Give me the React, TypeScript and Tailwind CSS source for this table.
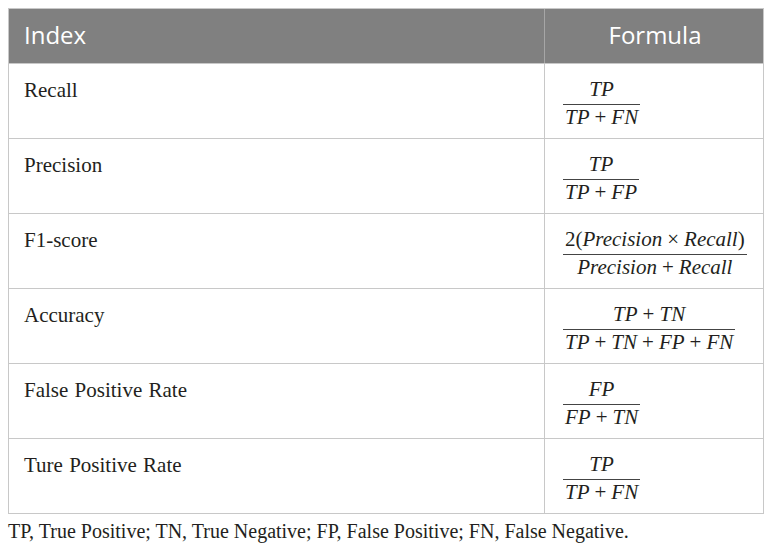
import React from "react";

const serif = { fontFamily: '"Liberation Serif", "Times New Roman", serif' };

function I({ children }: { children: React.ReactNode }) {
  return <span className="italic">{children}</span>;
}

function Op({ children }: { children: React.ReactNode }) {
  return <span className="not-italic px-[5px]">{children}</span>;
}

function Frac({ num, den }: { num: React.ReactNode; den: React.ReactNode }) {
  return (
    <div className="inline-flex flex-col items-stretch text-[21px] leading-[24px] text-[#231f20]">
      <div className="text-center pb-[3px] px-[2px] border-b border-[#444]">{num}</div>
      <div className="text-center px-[2px]">{den}</div>
    </div>
  );
}

const rows: { label: string; formula: React.ReactNode }[] = [
  {
    label: "Recall",
    formula: (
      <Frac
        num={<I>TP</I>}
        den={
          <>
            <I>TP</I>
            <Op>+</Op>
            <I>FN</I>
          </>
        }
      />
    ),
  },
  {
    label: "Precision",
    formula: (
      <Frac
        num={<I>TP</I>}
        den={
          <>
            <I>TP</I>
            <Op>+</Op>
            <I>FP</I>
          </>
        }
      />
    ),
  },
  {
    label: "F1-score",
    formula: (
      <Frac
        num={
          <>
            2(<I>Precision</I>
            <Op>×</Op>
            <I>Recall</I>)
          </>
        }
        den={
          <>
            <I>Precision</I>
            <Op>+</Op>
            <I>Recall</I>
          </>
        }
      />
    ),
  },
  {
    label: "Accuracy",
    formula: (
      <Frac
        num={
          <>
            <I>TP</I>
            <Op>+</Op>
            <I>TN</I>
          </>
        }
        den={
          <>
            <I>TP</I>
            <Op>+</Op>
            <I>TN</I>
            <Op>+</Op>
            <I>FP</I>
            <Op>+</Op>
            <I>FN</I>
          </>
        }
      />
    ),
  },
  {
    label: "False Positive Rate",
    formula: (
      <Frac
        num={<I>FP</I>}
        den={
          <>
            <I>FP</I>
            <Op>+</Op>
            <I>TN</I>
          </>
        }
      />
    ),
  },
  {
    label: "Ture Positive Rate",
    formula: (
      <Frac
        num={<I>TP</I>}
        den={
          <>
            <I>TP</I>
            <Op>+</Op>
            <I>FN</I>
          </>
        }
      />
    ),
  },
];

export default function App() {
  return (
    <div className="w-[772px] h-[552px] bg-white pt-[8px] pl-[8px]" style={serif}>
      <div className="w-[756px] border border-[#c8c8c8]">
        <div
          className="grid grid-cols-[535px_1px_1fr] h-[54px] bg-[#808080] text-white text-[24px]"
          style={{ fontFamily: '"Open Sans", "Noto Sans", sans-serif' }}
        >
          <div className="flex items-center pl-[15px] pb-[2px]">Index</div>
          <div className="bg-[#a6a6a6]" />
          <div className="flex items-center justify-center pb-[2px] pl-[2px]">Formula</div>
        </div>
        {rows.map((r) => (
          <div
            key={r.label}
            className="grid grid-cols-[535px_1px_1fr] h-[75px] border-t border-[#c8c8c8]"
          >
            <div className="pl-[15px] pt-[11px] text-[21px] leading-[30px] text-[#231f20] [word-spacing:1px]">
              {r.label}
            </div>
            <div className="bg-[#c8c8c8]" />
            <div className="pl-[18px] pt-[13px]">{r.formula}</div>
          </div>
        ))}
      </div>
      <div className="mt-[4px] text-[20px] leading-[26px] text-[#231f20]">
        TP, True Positive; TN, True Negative; FP, False Positive; FN, False Negative.
      </div>
    </div>
  );
}
